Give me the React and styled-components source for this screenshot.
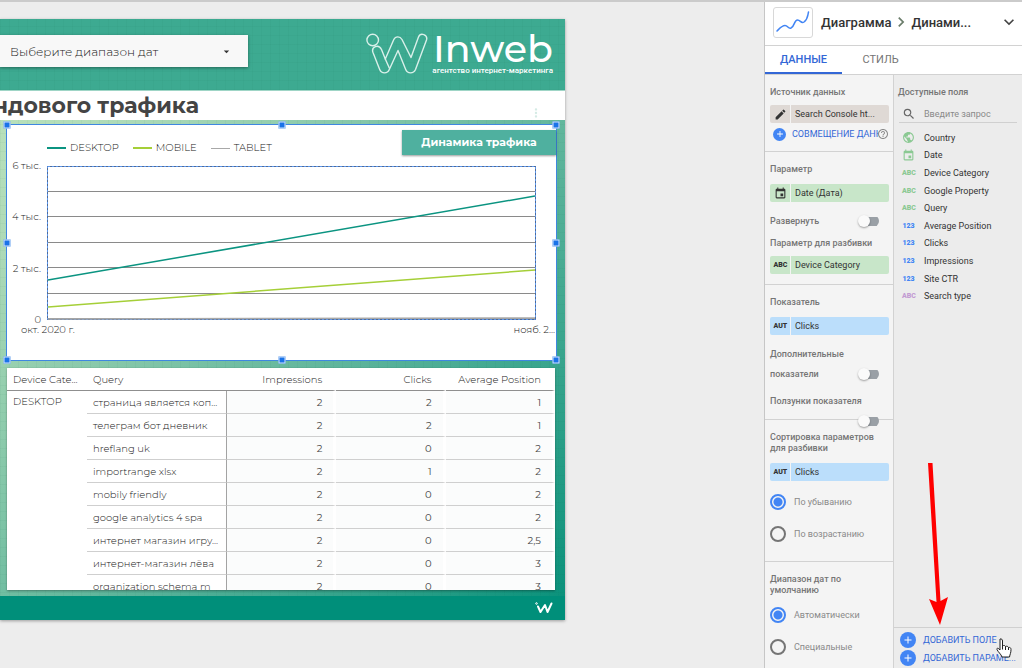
import React, { useState } from "react";
import styled, { createGlobalStyle } from "styled-components";
import {
  MdAdd,
  MdArrowDropDown,
  MdChevronRight,
  MdEdit,
  MdEvent,
  MdExpandMore,
  MdHelpOutline,
  MdMoreVert,
  MdPublic,
  MdSearch,
} from "react-icons/md";

const GlobalStyle = createGlobalStyle`
  * {
    box-sizing: border-box;
  }

  body {
    margin: 0;
    background: #ffffff;
    font-family: Roboto, "Liberation Sans", sans-serif;
  }

  button,
  input,
  select {
    font-family: inherit;
  }
`;

const Page = styled.div`
  display: flex;
  min-height: 100vh;
  margin-right: 2px;
  border-top: 2px solid #cbcbcb;
  background: #ededed;
  position: relative;
  overflow: hidden;
`;

/* ---------- Report ---------- */

const Workspace = styled.main`
  flex: 1;
  min-width: 0;
  padding: 17px 199px 40px 0;
  font-family: Montserrat, Inter, sans-serif;
`;

const Report = styled.div`
  background-color: #4aab92;
  background-image:
    repeating-linear-gradient(0deg, rgba(0, 90, 60, 0.04) 0 1px, transparent 1px 9px),
    repeating-linear-gradient(90deg, rgba(0, 90, 60, 0.04) 0 1px, transparent 1px 9px),
    linear-gradient(135deg, #c2e6bd 0%, #addab7 20%, #58b299 62%, #07907a 100%);
  box-shadow: 0 1px 3px rgba(0, 0, 0, 0.35);
`;

const ReportHeader = styled.header`
  display: flex;
  justify-content: space-between;
  height: 72px;
  padding: 13px 12px 0 0;
  background-color: #3daa91;
  background-image:
    repeating-linear-gradient(0deg, rgba(0, 90, 60, 0.04) 0 1px, transparent 1px 9px),
    repeating-linear-gradient(90deg, rgba(0, 90, 60, 0.04) 0 1px, transparent 1px 9px);
  border-bottom: 1px solid #9fd5c6;
`;

const DateRange = styled.label`
  display: flex;
  align-items: center;
  width: 248px;
  height: 32px;
  margin-top: 3px;
  padding: 0 15px 0 10px;
  background: #f8f8f8;
  box-shadow: 0 1px 3px rgba(0, 0, 0, 0.4);
  color: #333333;
`;

const DateSelect = styled.select`
  flex: 1;
  appearance: none;
  border: 0;
  padding: 0;
  background: transparent;
  color: #222222;
  font-size: 12px;
  font-weight: 300;
`;

const Logo = styled.div`
  display: flex;
  gap: 4px;
  color: #ffffff;
`;

const LogoText = styled.div`
  display: flex;
  flex-direction: column;
  align-items: flex-end;
`;

const LogoName = styled.span`
  font-size: 38px;
  font-weight: 500;
  line-height: 34px;
`;

const LogoTagline = styled.span`
  font-family: Roboto, sans-serif;
  font-size: 8px;
  font-weight: 500;
  line-height: 10px;
`;

const TitleBand = styled.div`
  display: flex;
  align-items: center;
  justify-content: space-between;
  height: 29px;
  padding-right: 22px;
  background: #ffffff;
  color: #d5ebe5;
`;

const Title = styled.h1`
  display: flex;
  justify-content: flex-end;
  width: 199px;
  margin: 0;
  color: #444444;
  font-size: 22px;
  font-weight: 700;
  line-height: 28px;
  white-space: nowrap;
`;

const TitleMenu = styled(MdMoreVert)`
  align-self: flex-end;
`;

const ReportBody = styled.div`
  display: flex;
  flex-direction: column;
  gap: 8px;
  padding: 5px 9px 6px 7px;
`;

const ChartCard = styled.section`
  position: relative;
  height: 235px;
  background: #ffffff;
  outline: 1px solid #3f87e0;
  padding: 15px 20px 0 4px;
`;

const Handle = styled.span`
  position: absolute;
  top: ${({ $y }) => $y};
  left: ${({ $x }) => $x};
  width: 7px;
  height: 7px;
  transform: translate(-50%, -50%);
  background: #1a73e8;
  border: 1px solid #d6e6fb;
`;

const ChartLabel = styled.h2`
  position: absolute;
  top: 5px;
  right: 0;
  width: 154px;
  margin: 0;
  background: #4fb09f;
  box-shadow: 0 1px 2px rgba(0, 0, 0, 0.4);
  color: #ffffff;
  font-size: 11px;
  font-weight: 700;
  line-height: 25px;
  text-align: center;
`;

const Legend = styled.div`
  display: flex;
  gap: 14px;
  padding-left: 36px;
`;

const LegendItem = styled.span`
  display: flex;
  align-items: center;
  gap: 4px;
  color: #222222;
  font-size: 10px;
  font-weight: 300;
  line-height: 16px;

  &::before {
    content: "";
    width: 19px;
    height: ${({ $thin }) => ($thin ? "1px" : "2px")};
    background: ${({ $color }) => $color};
  }
`;

const PlotGrid = styled.div`
  display: grid;
  grid-template-columns: 30px 1fr;
  column-gap: 6px;
  margin-top: 10px;
  color: #222222;
  font-size: 10px;
  font-weight: 300;
  line-height: 12px;
`;

const YLabels = styled.div`
  display: flex;
  flex-direction: column;
  justify-content: space-between;
  margin: -6px 0;
  text-align: right;
  white-space: nowrap;
`;

const Plot = styled.svg`
  display: block;
  width: 100%;
  height: 154px;
  overflow: visible;
`;

const XLabels = styled.div`
  display: flex;
  justify-content: space-between;
  margin: 4px -19px 0 10px;
  color: #222222;
  font-size: 10px;
  font-weight: 300;
  line-height: 12px;
`;

const TableCard = styled.section`
  height: 222px;
  overflow: hidden;
  background: #ffffff;
  box-shadow: 0 1px 2px rgba(0, 0, 0, 0.35);
  margin-right: 1px;
`;

const DataTable = styled.table`
  width: 100%;
  table-layout: fixed;
  border-collapse: separate;
  border-spacing: 0;
  color: #222222;
  font-size: 10px;
  font-weight: 300;
`;

const HeadCell = styled.th`
  width: ${({ $width }) => $width};
  height: 23px;
  padding: 0 ${({ $metric }) => ($metric ? "11px" : "6px")} 0 6px;
  border-bottom: 1px solid #8f8f8f;
  ${({ $metric }) => $metric && "border-right: 3px solid #ffffff;"}
  font-weight: 300;
  text-align: ${({ $metric }) => ($metric ? "right" : "left")};
  white-space: nowrap;
`;

const DeviceCell = styled.td`
  padding: 3px 6px;
  line-height: 16px;
  vertical-align: top;
`;

const QueryCell = styled.td`
  height: 23px;
  padding: 0 0 0 6px;
  border-right: 1px solid #a3a3a3;
  border-bottom: 1px solid #cfcfcf;
  white-space: nowrap;
`;

const MetricCell = styled.td`
  height: 23px;
  padding: 0 11px 0 6px;
  background: #fbfcfc;
  border-right: 3px solid #ffffff;
  border-bottom: 1px solid #cfcfcf;
  color: #444444;
  font-weight: 400;
  text-align: right;
`;

const ReportFooter = styled.footer`
  display: flex;
  align-items: center;
  justify-content: flex-end;
  height: 24px;
  padding-right: 12px;
  background: #008f7a;
`;

/* ---------- Properties panel ---------- */

const Panel = styled.aside`
  display: flex;
  flex-direction: column;
  width: 258px;
  border-left: 1px solid #c6c6c6;
  background: #ffffff;
`;

const PanelHeader = styled.div`
  display: flex;
  align-items: center;
  height: 44px;
  padding: 0 3px 3px 8px;
  border-bottom: 1px solid #d2d2d2;
  color: #333333;
  font-size: 13px;
  font-weight: 500;
`;

const ChartThumb = styled.span`
  display: flex;
  align-items: center;
  justify-content: center;
  width: 40px;
  height: 31px;
  margin-right: 8px;
  border: 1px solid #d8d8d8;
  border-radius: 3px;
`;

const CollapseButton = styled.button`
  display: flex;
  margin-left: auto;
  border: 0;
  padding: 0;
  background: transparent;
  color: #444444;
`;

const Tabs = styled.div`
  display: flex;
  height: 29px;
  border-bottom: 1px solid #d2d2d2;
`;

const Tab = styled.button`
  width: 77px;
  border: 0;
  border-bottom: 2px solid ${({ $active }) => ($active ? "#3367d6" : "transparent")};
  padding: 0;
  background: transparent;
  color: ${({ $active }) => ($active ? "#3367d6" : "#757575")};
  font-size: 11px;
  font-weight: ${({ $active }) => ($active ? 500 : 400)};
`;

const Columns = styled.div`
  display: flex;
  flex: 1;
`;

const Setup = styled.div`
  flex: 1;
  min-width: 0;
  background: #f4f4f4;
  border-right: 1px solid #d2d2d2;
`;

const Section = styled.section`
  padding: 12px 4px ${({ $bottom = "0" }) => $bottom} 5px;
  border-bottom: 1px solid #d2d2d2;

  &:last-child {
    border-bottom: 0;
  }
`;

// The second switch wraps below its caption and hangs over the divider
const MetricSection = styled(Section)`
  height: 135px;
`;

const Label = styled.h3`
  margin: 0 0 ${({ $gap = "7px" }) => $gap};
  color: #757575;
  font-size: 9px;
  font-weight: 500;
  line-height: 11px;
`;

const Chip = styled.button`
  display: flex;
  width: 100%;
  height: 18px;
  border: 0;
  border-radius: 2px;
  padding: 0;
  background: ${({ $color }) => $color};
  color: #333333;
  font-size: 9px;
  line-height: 18px;
  overflow: hidden;
`;

const ChipIcon = styled.span`
  display: flex;
  align-items: center;
  justify-content: center;
  width: 21px;
  height: 18px;
  margin-right: 4px;
  border-right: 1px solid #f4f4f4;
`;

const TypeMark = styled.span`
  width: 13px;
  color: ${({ $color }) => $color};
  font-size: 7px;
  font-weight: 900;
  text-align: center;
`;

const BlendRow = styled.div`
  display: flex;
  align-items: center;
  gap: 6px;
  height: 22px;
  padding-left: 3px;
`;

const PlusBadge = styled.span`
  display: flex;
  flex: none;
  align-items: center;
  justify-content: center;
  width: ${({ $size }) => $size};
  height: ${({ $size }) => $size};
  border-radius: 50%;
  background: #4285f4;
  color: #ffffff;
`;

const BlendButton = styled.button`
  flex: 1;
  min-width: 0;
  border: 0;
  padding: 0;
  background: transparent;
  color: #3367d6;
  font-size: 9px;
  text-align: left;
  white-space: nowrap;
  overflow: hidden;
`;

const HelpIcon = styled(MdHelpOutline)`
  flex: none;
  margin-left: -8px;
  color: #8a8a8a;
`;

const SwitchGap = styled.div`
  padding: 9px 0 7px;
`;

const SwitchRow = styled.label`
  display: flex;
  flex-wrap: wrap;
  align-items: flex-end;
  padding-right: 10px;
  color: #757575;
  font-size: 9px;
  font-weight: 500;
  line-height: 20px;
`;

const SwitchCaption = styled.span`
  ${({ $wide }) => $wide && "flex-basis: 100%;"}
`;

const Switch = styled.input`
  appearance: none;
  display: flex;
  align-items: center;
  width: 21px;
  height: 12px;
  margin: 4px 0 4px auto;
  background: linear-gradient(#9aa0a6, #9aa0a6) right / 16px 9px no-repeat;
  border-radius: 6px;

  &::before {
    content: "";
    width: 12px;
    height: 12px;
    border-radius: 50%;
    background: #fafafa;
    box-shadow: 0 1px 2px rgba(0, 0, 0, 0.35);
    transform: translateX(${({ checked }) => (checked ? "9px" : "0")});
  }
`;

const RadioList = styled.div`
  padding-top: ${({ $top }) => $top};
`;

const RadioRow = styled.label`
  display: flex;
  align-items: center;
  gap: 8px;
  height: 32px;
  color: #8a8a8a;
  font-size: 9px;
`;

const Radio = styled.input`
  appearance: none;
  width: 16px;
  height: 16px;
  margin: 0;
  border: 2px solid #757575;
  border-radius: 50%;

  &:checked {
    border-color: #4285f4;
    background: radial-gradient(circle, #4285f4 0 4px, transparent 5px);
  }
`;

const Fields = styled.div`
  display: flex;
  flex-direction: column;
  width: 128px;
  padding-top: 12px;
  background: #ececec;
`;

const FieldsTitle = styled(Label)`
  padding-left: 4px;
`;

const SearchBox = styled.label`
  display: flex;
  align-items: center;
  gap: 8px;
  height: 18px;
  margin: 0 5px 6px;
  padding-left: 3px;
  border-bottom: 1px solid #d0d0d0;
  color: #666666;
`;

const SearchInput = styled.input`
  flex: 1;
  min-width: 0;
  border: 0;
  outline: 0;
  padding: 0;
  background: transparent;
  font-size: 9px;

  &::placeholder {
    color: #8a8a8a;
  }
`;

const FieldList = styled.ul`
  display: grid;
  grid-auto-rows: 1fr;
  height: 176px;
  margin: 0;
  padding: 0 0 0 8px;
  list-style: none;
`;

const FieldItem = styled.li`
  display: flex;
  align-items: center;
  gap: 9px;
  color: #333333;
  font-size: 9px;
`;

const AddBar = styled.div`
  margin-top: auto;
  padding: 3px 6px 1px;
  border-top: 1px solid #d0d0d0;
`;

const AddButton = styled.button`
  display: flex;
  align-items: center;
  gap: 7px;
  width: 100%;
  height: 18px;
  border: 0;
  padding: 0;
  background: transparent;
  color: #3367d6;
  font-size: 9px;
  white-space: nowrap;
`;

const Arrow = styled.svg`
  position: absolute;
  right: 74px;
  bottom: 42px;
`;

const Pointer = styled.svg`
  position: absolute;
  right: 10px;
  bottom: 10px;
`;

const GREEN = "#8bc993";
const BLUE = "#4285f4";
const PURPLE = "#c39bd3";

const series = [
  { name: "DESKTOP", color: "#0b9481", from: 114, to: 30 },
  { name: "MOBILE", color: "#a5cf38", from: 141, to: 104 },
  { name: "TABLET", color: "#a8a8a8", from: 153, to: 152, thin: true },
];

const rows = [
  ["страница является коп...", "2", "2", "1"],
  ["телеграм бот дневник", "2", "2", "1"],
  ["hreflang uk", "2", "0", "2"],
  ["importrange xlsx", "2", "1", "2"],
  ["mobily friendly", "2", "0", "2"],
  ["google analytics 4 spa", "2", "0", "2"],
  ["интернет магазин игру...", "2", "0", "2,5"],
  ["интернет-магазин лёва", "2", "0", "3"],
  ["organization schema m", "2", "0", "3"],
];

const fields = [
  { name: "Country", icon: MdPublic },
  { name: "Date", icon: MdEvent },
  { name: "Device Category", mark: "ABC", color: GREEN },
  { name: "Google Property", mark: "ABC", color: GREEN },
  { name: "Query", mark: "ABC", color: GREEN },
  { name: "Average Position", mark: "123", color: BLUE },
  { name: "Clicks", mark: "123", color: BLUE },
  { name: "Impressions", mark: "123", color: BLUE },
  { name: "Site CTR", mark: "123", color: BLUE },
  { name: "Search type", mark: "ABC", color: PURPLE },
];

const handles = [
  ["0%", "0%"],
  ["50%", "0%"],
  ["100%", "0%"],
  ["0%", "50%"],
  ["100%", "50%"],
  ["0%", "100%"],
  ["50%", "100%"],
  ["100%", "100%"],
];

const LogoMark = () => (
  <svg
    width="62"
    height="44"
    viewBox="0 0 62 44"
    fill="none"
    stroke="#d9f0ea"
    strokeWidth="1.4"
    strokeLinejoin="round"
    strokeLinecap="round"
  >
    <circle cx="6.700" cy="8" r="5.800" />
    <path d="M7 20.500 L13.700 37.500 C15.500 42 21.500 42 23.300 37.500 L32 18.500 L39.700 37.500 C41.500 42 47.500 42 49.500 37.500 L60.500 8 C62 2.500 54.500 0 52.500 5 L45 25.500 L36 7.500 C34 4 29.500 4 27.800 7.500 L19.300 27 L15.500 17.500 C12.500 11.500 5 15 7 20.500 Z" />
    <path d="M19.300 27 L23.300 36" />
  </svg>
);

const SwitchField = ({ wide, children }) => {
  const [on, setOn] = useState(false);
  return (
    <SwitchRow>
      <SwitchCaption $wide={wide}>{children}</SwitchCaption>
      <Switch type="checkbox" checked={on} onChange={() => setOn(!on)} />
    </SwitchRow>
  );
};

const RadioGroup = ({ name, options }) => {
  const [value, setValue] = useState(options[0]);
  return options.map((option) => (
    <RadioRow key={option}>
      <Radio
        type="radio"
        name={name}
        checked={value === option}
        onChange={() => setValue(option)}
      />
      {option}
    </RadioRow>
  ));
};

const FieldChip = ({ color, icon, children }) => (
  <Chip $color={color}>
    <ChipIcon>{icon}</ChipIcon>
    {children}
  </Chip>
);

const TrafficChart = () => (
  <ChartCard>
    <Legend>
      {series.map(({ name, color, thin }) => (
        <LegendItem key={name} $color={color} $thin={thin}>
          {name}
        </LegendItem>
      ))}
    </Legend>
    <PlotGrid>
      <YLabels>
        <span>6 тыс.</span>
        <span>4 тыс.</span>
        <span>2 тыс.</span>
        <span>0</span>
      </YLabels>
      <Plot viewBox="0 0 489 154" preserveAspectRatio="none">
        {[26, 51, 77, 102, 128].map((y) => (
          <path key={y} d={`M0 ${y - 0.5}H489`} stroke="#8a8a8a" />
        ))}
        <path d="M0 152.500H488" stroke="#999999" />
        <rect x="0.5" y="0.5" width="488" height="153" fill="none" stroke="#444444" />
        <rect
          x="0.5"
          y="0.5"
          width="488"
          height="153"
          fill="none"
          stroke="#5b95ec"
          strokeDasharray="3 1"
        />
        {series.map(({ name, color, from, to }) => (
          <path key={name} d={`M1 ${from}L488 ${to}`} stroke={color} strokeWidth="1.5" />
        ))}
      </Plot>
    </PlotGrid>
    <XLabels>
      <span>окт. 2020 г.</span>
      <span>нояб. 2...</span>
    </XLabels>
    <ChartLabel>Динамика трафика</ChartLabel>
    {handles.map(([x, y]) => (
      <Handle key={x + y} $x={x} $y={y} />
    ))}
  </ChartCard>
);

const QueryTable = () => (
  <TableCard>
    <DataTable>
      <thead>
        <tr>
          <HeadCell $width="80px">Device Cate...</HeadCell>
          <HeadCell $width="140px">Query</HeadCell>
          <HeadCell $metric>Impressions</HeadCell>
          <HeadCell $metric>Clicks</HeadCell>
          <HeadCell $metric>Average Position</HeadCell>
        </tr>
      </thead>
      <tbody>
        {rows.map(([query, ...metrics], index) => (
          <tr key={query}>
            {index === 0 && <DeviceCell rowSpan={rows.length}>DESKTOP</DeviceCell>}
            <QueryCell>{query}</QueryCell>
            {metrics.map((metric, i) => (
              <MetricCell key={i}>{metric}</MetricCell>
            ))}
          </tr>
        ))}
      </tbody>
    </DataTable>
  </TableCard>
);

const PropertiesPanel = () => (
  <Panel>
    <PanelHeader>
      <ChartThumb>
        <svg width="34" height="22" viewBox="0 0 34 22" fill="none" stroke="#4285f4" strokeWidth="1.5">
          <path
            d="M1 20 C4 17 6 14.500 9 14.500 C12 14.500 12 18 15 17 C19 15 18 9 21.500 9 C24.500 9 25 13 28 11 C32 8 31.500 5 32.500 1"
            strokeLinecap="round"
          />
        </svg>
      </ChartThumb>
      Диаграмма
      <MdChevronRight size={20} color="#6b7d6b" />
      Динами...
      <CollapseButton aria-label="Свернуть">
        <MdExpandMore size={20} />
      </CollapseButton>
    </PanelHeader>
    <Tabs>
      <Tab $active>ДАННЫЕ</Tab>
      <Tab>СТИЛЬ</Tab>
    </Tabs>
    <Columns>
      <Setup>
        <Section $bottom="6px">
          <Label>Источник данных</Label>
          <FieldChip color="#dfd9d5" icon={<MdEdit size={13} />}>
            Search Console ht...
          </FieldChip>
          <BlendRow>
            <PlusBadge $size="13px">
              <MdAdd size={10} />
            </PlusBadge>
            <BlendButton>СОВМЕЩЕНИЕ ДАННЫХ</BlendButton>
            <HelpIcon size={12} />
          </BlendRow>
        </Section>
        <Section $bottom="10px">
          <Label $gap="9px">Параметр</Label>
          <FieldChip color="#c8e6c9" icon={<MdEvent size={13} />}>
            Date (Дата)
          </FieldChip>
          <SwitchGap>
            <SwitchField>Развернуть</SwitchField>
          </SwitchGap>
          <Label>Параметр для разбивки</Label>
          <FieldChip color="#c8e6c9" icon={<TypeMark>ABC</TypeMark>}>
            Device Category
          </FieldChip>
        </Section>
        <MetricSection>
          <Label $gap="9px">Показатель</Label>
          <FieldChip color="#bbdefb" icon={<TypeMark>AUT</TypeMark>}>
            Clicks
          </FieldChip>
          <SwitchGap>
            <SwitchField>
              Дополнительные
              <br />
              показатели
            </SwitchField>
          </SwitchGap>
          <SwitchField wide>Ползунки показателя</SwitchField>
        </MetricSection>
        <Section $bottom="11px">
          <Label $gap="9px">
            Сортировка параметров
            <br />
            для разбивки
          </Label>
          <FieldChip color="#bbdefb" icon={<TypeMark>AUT</TypeMark>}>
            Clicks
          </FieldChip>
          <RadioList $top="5px">
            <RadioGroup name="sort" options={["По убыванию", "По возрастанию"]} />
          </RadioList>
        </Section>
        <Section>
          <Label $gap="3px">
            Диапазон дат по
            <br />
            умолчанию
          </Label>
          <RadioList $top="0">
            <RadioGroup name="range" options={["Автоматически", "Специальные"]} />
          </RadioList>
        </Section>
      </Setup>
      <Fields>
        <FieldsTitle>Доступные поля</FieldsTitle>
        <SearchBox>
          <MdSearch size={14} />
          <SearchInput placeholder="Введите запрос" aria-label="Поиск полей" />
        </SearchBox>
        <FieldList>
          {fields.map(({ name, icon: Icon, mark, color }) => (
            <FieldItem key={name}>
              {Icon ? <Icon size={13} color={GREEN} /> : <TypeMark $color={color}>{mark}</TypeMark>}
              {name}
            </FieldItem>
          ))}
        </FieldList>
        <AddBar>
          {["ДОБАВИТЬ ПОЛЕ", "ДОБАВИТЬ ПАРАМЕ..."].map((text) => (
            <AddButton key={text}>
              <PlusBadge $size="16px">
                <MdAdd size={12} />
              </PlusBadge>
              {text}
            </AddButton>
          ))}
        </AddBar>
      </Fields>
    </Columns>
  </Panel>
);

const App = () => {
  return (
    <>
      <GlobalStyle />
      <Page>
        <Workspace>
          <Report>
            <ReportHeader>
              <DateRange>
                <DateSelect aria-label="Диапазон дат">
                  <option>Выберите диапазон дат</option>
                </DateSelect>
                <MdArrowDropDown size={13} />
              </DateRange>
              <Logo>
                <LogoMark />
                <LogoText>
                  <LogoName>Inweb</LogoName>
                  <LogoTagline>агентство интернет-маркетинга</LogoTagline>
                </LogoText>
              </Logo>
            </ReportHeader>
            <TitleBand>
              <Title>ндового трафика</Title>
              <TitleMenu size={14} />
            </TitleBand>
            <ReportBody>
              <TrafficChart />
              <QueryTable />
            </ReportBody>
            <ReportFooter>
              <svg width="18" height="12" viewBox="0 0 18 12" fill="none" stroke="#ffffff">
                <path
                  d="M3 4.500 L5.500 10 L10 3 L12.500 10 L16.500 1.500"
                  strokeWidth="2"
                  strokeLinejoin="round"
                  strokeLinecap="round"
                />
                <circle cx="1.500" cy="1.500" r="0.800" />
              </svg>
            </ReportFooter>
          </Report>
        </Workspace>
        <PropertiesPanel />
        <Arrow width="20" height="164" viewBox="0 0 20 164" fill="#ff0000">
          <path d="M0 1 L4.500 1 L12.500 139 L20 135 L12 163 L1 137 L8.500 140 Z" />
        </Arrow>
        <Pointer width="16" height="20" viewBox="0 0 16 20">
          <path
            d="M4 1 C5.500 0.500 6.500 1.500 6.500 3 V8 C8 7 9 7.500 9.500 8.500 C11 7.800 12 8.500 12.500 9.500 C14 9 15 10 15 11.500 C15 15 14 16 13.500 19 H6 C5 16 2 14 1 11.500 C0.500 10 2 9.500 4 12 V3 Z"
            fill="#ffffff"
            stroke="#222222"
          />
          <path d="M6.500 8V11.500M9.500 8.500V12M12.500 9.500V12" stroke="#222222" />
        </Pointer>
      </Page>
    </>
  );
};

export default App;
